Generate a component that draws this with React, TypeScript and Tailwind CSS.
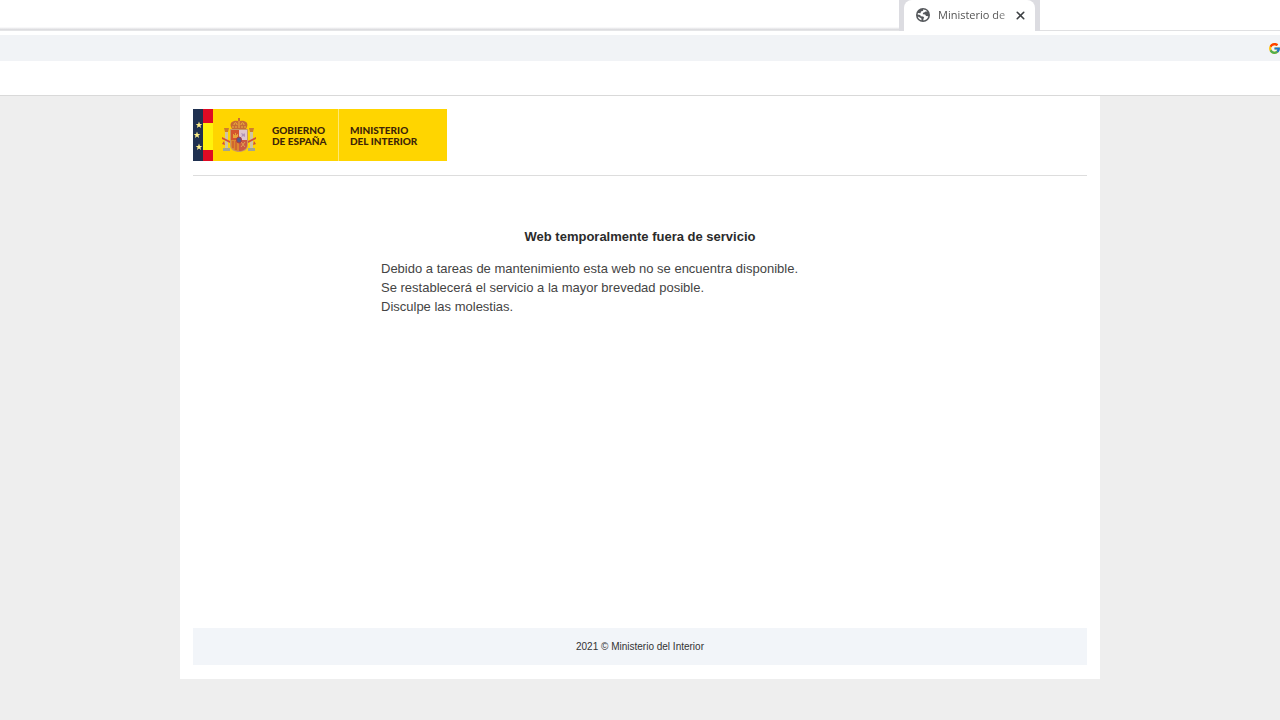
import { FcGoogle } from 'react-icons/fc';
import { X } from 'lucide-react';

const messages = [
  'Debido a tareas de mantenimiento esta web no se encuentra disponible.',
  'Se restablecerá el servicio a la mayor brevedad posible.',
  'Disculpe las molestias.',
];

const STAR = 'M0,-3.4 L0.9,-1.1 L3.3,-1 L1.4,0.5 L2.1,2.9 L0,1.5 L-2.1,2.9 L-1.4,0.5 L-3.3,-1 L-0.9,-1.1 Z';

function Globe() {
  return (
    <svg width="14" height="14" viewBox="0 0 14 14" className="shrink-0" aria-hidden="true">
      <circle cx="7" cy="7" r="7" fill="#55585c" />
      <path d="M7 1.500C9 1.500 10.500 2.200 11.400 3.500L9.500 3.400 8.200 4.600 7 4.800 6.800 6.200 9.200 6.500 10 8 12.300 8.200C11.700 10.700 9.800 12.200 7.500 12.400L7.300 11 8.200 9.700 7.200 8.500 4.800 8.200 4.200 7 1.600 6.600C1.700 6 1.800 5.500 2 5L4.500 5.300 5 3.500 7.200 2.700Z" fill="#fff" />
      <path d="M1.800 8.400L3.800 9.500 5.400 10.500 5.500 12.300C3.700 11.800 2.300 10.400 1.800 8.400Z" fill="#fff" />
    </svg>
  );
}

function Flags() {
  return (
    <svg width="20" height="52" viewBox="0 0 20 52" className="shrink-0" aria-hidden="true">
      <rect width="10" height="52" fill="#1f3050" />
      <rect x="10" width="10" height="52" fill="#df0a24" />
      <rect x="10" y="14" width="10" height="27" fill="#fff20c" />
      <g fill="#fff08a">
        <path d={STAR} transform="translate(6 16)" />
        <path d={STAR} transform="translate(4 26)" />
        <path d={STAR} transform="translate(6 38)" />
      </g>
    </svg>
  );
}

function CoatOfArms() {
  return (
    <svg width="34" height="36" viewBox="0 0 34 36" className="shrink-0" aria-hidden="true">
      {/* columns */}
      <g>
        <rect x="3" y="15" width="3" height="16" fill="#cfc4a0" />
        <rect x="28" y="15" width="3" height="16" fill="#cfc4a0" />
        <path d="M2 11h5l-1 4H3zM27 11h5l-1 4h-3z" fill="#cf7d2c" />
        <path d="M1 31h7v3H1zM26 31h7v3h-7z" fill="#a3a58f" />
        <path d="M0 20l8 4v2l-8-4zM34 20l-8 4v2l8-4z" fill="#d1503a" />
        <path d="M0 27l2-3 1 4zM34 27l-2-3-1 4z" fill="#d1503a" />
      </g>
      {/* crown */}
      <path d="M9 10C7 5 12 3 16 4V1h2v3c4-1 9 1 7 6l-1 2H10z" fill="#c76c35" />
      <path d="M12 8c0-3 3-3 3 0M19 8c0-3 3-3 3 0M17 4v5" stroke="#eeb53f" fill="none" />
      <path d="M10 10h14" stroke="#eeb53f" strokeDasharray="2 1" />
      {/* shield */}
      <path d="M8 12h18v16c0 5-5 7-9 7s-9-2-9-7z" fill="#c99a63" />
      <path d="M9 13h8v10H9z" fill="#d4552f" />
      <path d="M17 13h8v10h-8z" fill="#dfc5cd" />
      <path d="M9 23h8v11c-4 0-8-2-8-6z" fill="#dc8730" />
      <path d="M17 23h8v5c0 4-4 6-8 6z" fill="#cb5a42" />
      <path d="M11 24v7M14 24v9" stroke="#c5492f" />
      <path d="M11 21v-4h1v1h1v-2h1v2h1v-1h1v4z" fill="#e8a53a" />
      <path d="M19 21l1-3-1-2 3 1 1-1v4l-2-1z" fill="#b394b4" />
      <path d="M19 25l4 5M23 25l-4 5" stroke="#e3a550" />
      <ellipse cx="17" cy="23" rx="2.500" ry="3" fill="#535a8c" stroke="#b03b3d" />
    </svg>
  );
}

function Logo() {
  return (
    <a
      href="#"
      className="flex h-[52px] w-[254px] items-center bg-[#ffd500] font-['Lato','Gill_Sans',sans-serif] text-[10px] leading-[11px] font-black text-[#3d2508]"
    >
      <Flags />
      <span className="flex flex-1 items-center gap-4 pl-[9px]">
        <CoatOfArms />
        <span className="pt-0.5 whitespace-nowrap">
          GOBIERNO
          <br />
          DE ESPAÑA
        </span>
      </span>
      <span className="flex h-full w-[109px] items-center border-l border-[#ffe873] pl-[11px] whitespace-nowrap">
        <span className="pt-0.5">
          MINISTERIO
          <br />
          DEL INTERIOR
        </span>
      </span>
    </a>
  );
}

function BrowserBar() {
  return (
    <div className="border-b border-[#d9d9d9] bg-white">
      <div className="flex h-[31px] overflow-hidden">
        <div className="flex flex-1 flex-col">
          <div className="h-[27px]" />
          <div className="h-1 border-b border-[#e4e4e6] bg-linear-to-b from-white to-[#d6d6da]" />
        </div>
        <div className="w-[141px] bg-[#dcdce1] px-[5px]">
          <div className="flex h-full items-center rounded-t-lg bg-white pr-2 pb-px pl-3">
            <Globe />
            <span className="ml-2 flex-1 bg-linear-to-r from-[#4c4c4c] from-75% to-[#d0d0d0] bg-clip-text font-['Open_Sans',sans-serif] text-[11px] whitespace-nowrap text-transparent">
              Ministerio de
            </span>
            <button type="button" aria-label="Cerrar pestaña" className="text-[#3c4043]">
              <X size={13} strokeWidth={3} />
            </button>
          </div>
        </div>
        <div className="w-60 border-b border-[#e0e0e2]" />
      </div>
      <div className="mt-1 flex h-[26px] items-center justify-end overflow-hidden bg-[#f1f3f6]">
        <FcGoogle size={13} className="-mr-px shrink-0" />
      </div>
      <div className="h-[34px]" />
    </div>
  );
}

export default function App() {
  return (
    <div className="min-h-screen bg-[#eee] font-['Liberation_Sans',Arial,sans-serif] text-[#444]">
      <BrowserBar />
      <div className="mx-auto flex max-w-[920px] flex-col bg-white p-[13px] pb-3.5">
        <header className="border-b border-[#ddd] pb-3.5">
          <Logo />
        </header>
        <main className="min-h-[452px] px-4 pt-[51px]">
          <h1 className="text-center text-[13px] leading-[19px] font-bold text-[#2b2b2b]">
            Web temporalmente fuera de servicio
          </h1>
          <div className="mx-auto mt-[13px] max-w-[518px] text-[13px] leading-[19px]">
            {messages.map((message) => (
              <p key={message}>{message}</p>
            ))}
          </div>
        </main>
        <footer className="bg-[#f2f5f9] py-[11px] text-center text-[10px] leading-[15px] text-[#333]">
          2021 © Ministerio del Interior
        </footer>
      </div>
    </div>
  );
}
